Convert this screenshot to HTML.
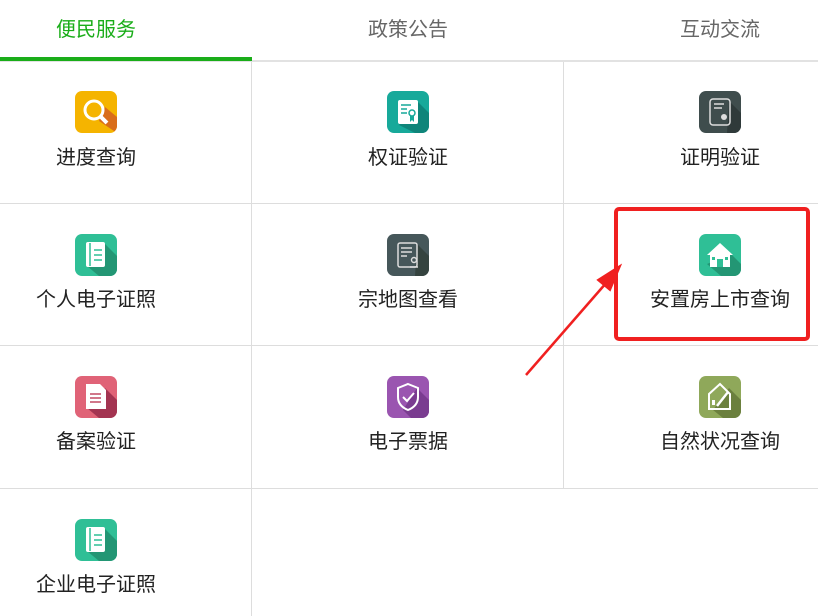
<!DOCTYPE html>
<html><head><meta charset="utf-8"><style>
*{margin:0;padding:0;box-sizing:border-box}
body{width:818px;height:616px;background:#fff;position:relative;overflow:hidden;font-family:"Liberation Sans","Noto Sans CJK SC",sans-serif}
.t{position:absolute;top:13px;font-size:20px;color:#666;transform:translateX(-50%);white-space:nowrap}
.l{position:absolute;background:#ddd}
.ic{position:absolute;width:42px;height:42px;border-radius:7px;overflow:hidden;transform:translateX(-50%)}
.ic svg{position:absolute;left:0;top:0}
.tx{position:absolute;font-size:20px;color:#222;transform:translateX(-50%);white-space:nowrap;line-height:24px}
</style></head><body>
<div class="t" style="left:96px;color:#1aad19">便民服务</div>
<div class="t" style="left:408px">政策公告</div>
<div class="t" style="left:720px">互动交流</div>
<div class="l" style="left:0;top:60px;width:818px;height:2px;background:#e2e2e2"></div>
<div class="l" style="left:0;top:57px;width:252px;height:4px;background:#1aad19"></div>
<div class="l" style="left:251px;top:62px;width:1px;height:554px"></div>
<div class="l" style="left:563px;top:62px;width:1px;height:426px"></div>
<div class="l" style="left:0;top:203px;width:818px;height:1px"></div>
<div class="l" style="left:0;top:345px;width:818px;height:1px"></div>
<div class="l" style="left:0;top:488px;width:818px;height:1px"></div>

<!-- row1 -->
<div class="ic" style="left:96px;top:91px;background:#f5b400"><svg width="42" height="42"><path d="M24 30 L42 42 L42 26 L30 16Z" fill="#d96d1a"/><circle cx="19" cy="19" r="9" fill="none" stroke="#fff" stroke-width="3"/><path d="M25 25 L32 32" stroke="#fff" stroke-width="4"/></svg></div>
<div class="tx" style="left:96px;top:146px">进度查询</div>
<div class="ic" style="left:408px;top:91px;background:#17a99a"><svg width="42" height="42"><path d="M30 10 L42 22 L42 42 L28 42 L12 34Z" fill="#0f857a"/><rect x="11" y="9" width="20" height="24" rx="2" fill="#fff"/><path d="M14 14h10M14 18h6M14 22h6" stroke="#17a99a" stroke-width="1.6"/><circle cx="25" cy="22" r="3" fill="none" stroke="#17a99a" stroke-width="1.5"/><path d="M23 25v6l2-2 2 2v-6" fill="#17a99a"/></svg></div>
<div class="tx" style="left:408px;top:146px">权证验证</div>
<div class="ic" style="left:720px;top:91px;background:#3f4d4d"><svg width="42" height="42"><path d="M30 10 L42 22 L42 42 L28 42Z" fill="#2f3a3a"/><rect x="11" y="8" width="20" height="26" rx="3" fill="none" stroke="#ddd" stroke-width="1.5"/><path d="M15 13h10M15 17h8" stroke="#ddd" stroke-width="1.4"/><circle cx="25" cy="26" r="3" fill="#ddd"/></svg></div>
<div class="tx" style="left:720px;top:146px">证明验证</div>
<!-- row2 -->
<div class="ic" style="left:96px;top:234px;background:#2fbf96"><svg width="42" height="42"><path d="M30 10 L42 22 L42 42 L24 42 L12 32Z" fill="#239674"/><rect x="11" y="8" width="19" height="25" rx="2" fill="#fff"/><path d="M15 9v23" stroke="#2fbf96" stroke-width="1.5"/><path d="M19 16h8M19 21h8M19 26h8" stroke="#2fbf96" stroke-width="1.6"/></svg></div>
<div class="tx" style="left:96px;top:288px">个人电子证照</div>
<div class="ic" style="left:408px;top:234px;background:#46575a"><svg width="42" height="42"><path d="M30 10 L42 22 L42 42 L28 42Z" fill="#35433f"/><rect x="11" y="9" width="19" height="24" rx="2" fill="none" stroke="#ddd" stroke-width="1.5"/><path d="M14 14h11M14 18h11M14 22h6" stroke="#ddd" stroke-width="1.4"/><circle cx="27" cy="26" r="2.5" fill="none" stroke="#ddd" stroke-width="1.4"/><path d="M23 33h8" stroke="#ddd" stroke-width="1.6"/></svg></div>
<div class="tx" style="left:408px;top:288px">宗地图查看</div>
<div class="ic" style="left:720px;top:234px;background:#2fbf96"><svg width="42" height="42"><path d="M32 20 L42 30 L42 42 L22 42 L8 30Z" fill="#239674"/><path d="M21 9 L8 21 L11 21 L11 33 L31 33 L31 21 L34 21Z" fill="#fff"/><rect x="18" y="25" width="6" height="8" fill="#2fbf96"/><rect x="13" y="23" width="3" height="3" fill="#2fbf96"/><rect x="26" y="23" width="3" height="3" fill="#2fbf96"/></svg></div>
<div class="tx" style="left:720px;top:288px">安置房上市查询</div>
<!-- row3 -->
<div class="ic" style="left:96px;top:376px;background:#e06377"><svg width="42" height="42"><path d="M30 12 L42 24 L42 42 L24 42 L12 32Z" fill="#a33451"/><path d="M11 8h14l6 6v19h-20Z" fill="#fff"/><path d="M15 18h11M15 22h11M15 26h11" stroke="#c24a63" stroke-width="1.6"/></svg></div>
<div class="tx" style="left:96px;top:430px">备案验证</div>
<div class="ic" style="left:408px;top:376px;background:#9a55b0"><svg width="42" height="42"><path d="M30 12 L42 24 L42 42 L24 42 L16 34Z" fill="#7a3c90"/><path d="M21 8 L31 12 L31 21 C31 28 26 32 21 34 C16 32 11 28 11 21 L11 12Z" fill="none" stroke="#fff" stroke-width="2"/><path d="M16 21 L20 25 L27 17" fill="none" stroke="#fff" stroke-width="2"/></svg></div>
<div class="tx" style="left:408px;top:430px">电子票据</div>
<div class="ic" style="left:720px;top:376px;background:#8fa85a"><svg width="42" height="42"><path d="M30 12 L42 24 L42 42 L24 42 L14 34Z" fill="#6b803e"/><path d="M21 8 L10 18 L10 33 L31 33 L31 18Z" fill="none" stroke="#fff" stroke-width="2"/><rect x="13" y="24" width="3" height="5" fill="#fff"/><path d="M18 30 L29 16" stroke="#fff" stroke-width="2.5"/></svg></div>
<div class="tx" style="left:720px;top:430px">自然状况查询</div>
<!-- row4 -->
<div class="ic" style="left:96px;top:519px;background:#2fbf96"><svg width="42" height="42"><path d="M30 10 L42 22 L42 42 L24 42 L12 32Z" fill="#239674"/><rect x="11" y="8" width="19" height="25" rx="2" fill="#fff"/><path d="M15 9v23" stroke="#2fbf96" stroke-width="1.5"/><path d="M19 16h8M19 21h8M19 26h8" stroke="#2fbf96" stroke-width="1.6"/></svg></div>
<div class="tx" style="left:96px;top:573px">企业电子证照</div>

<!-- annotation -->
<div style="position:absolute;left:614px;top:207px;width:196px;height:134px;border:4px solid #f02020;border-radius:5px"></div>
<svg style="position:absolute;left:0;top:0" width="818" height="616"><path d="M526 375 L607 282" stroke="#f02020" stroke-width="2.5"/><path d="M620 266 L598 280 L610 290Z" fill="#f02020" stroke="#f02020" stroke-width="2"/></svg>
</body></html>
